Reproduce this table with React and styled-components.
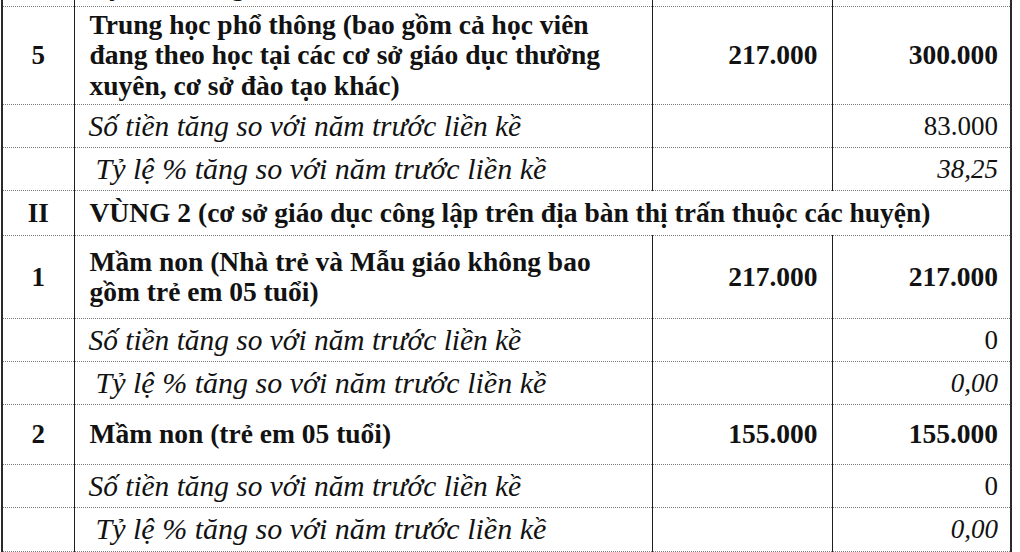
import React from "react";
import styled, { createGlobalStyle } from "styled-components";

const GlobalStyle = createGlobalStyle`
  html, body {
    margin: 0;
    padding: 0;
    background: #ffffff;
    overflow: hidden;
  }
  body {
    font-family: "Liberation Serif", "Times New Roman", serif;
    color: #121212;
  }
`;

const Page = styled.div`
  width: 1020px;
  height: 552px;
  overflow: hidden;
  padding-left: 1px;
  box-sizing: border-box;
`;

const Table = styled.table`
  border-collapse: collapse;
  table-layout: fixed;
  width: 1009px;
  margin-top: -37px;
  font-size: 27px;
  line-height: 30.5px;
  border-left: 2px solid #2a2a2a;
  border-right: 2px solid #2a2a2a;
`;

const Row = styled.tr`
  height: ${(p) => p.$h}px;
`;

const Cell = styled.td`
  padding: 0 ${(p) => p.$pr ?? 10}px 0 ${(p) => p.$pl ?? 15}px;
  border-left: 1px solid #1e1e1e;
  border-right: 1px solid #1e1e1e;
  border-top: 1px dotted #7a7a7a;
  border-bottom: 1px dotted #7a7a7a;
  text-align: ${(p) => p.$align || "left"};
  font-size: ${(p) => p.$size ?? 27}px;
  font-weight: ${(p) => (p.$bold ? 700 : 400)};
  font-style: ${(p) => (p.$italic ? "italic" : "normal")};
  vertical-align: middle;
  white-space: nowrap;
  overflow: hidden;
`;

const IndexCell = styled(Cell).attrs({ $align: "center", $bold: true, $pl: 0, $pr: 0 })``;

const NumCell = styled(Cell).attrs({ $align: "right", $pl: 0 })``;

const INC = "Số tiền tăng so với năm trước liền kề";
const PCT = "Tỷ lệ % tăng so với năm trước liền kề";

const rows = [
  { type: "pct", h: 43, value: "" },
  {
    type: "main",
    h: 98,
    idx: "5",
    lines: [
      "Trung học phổ thông (bao gồm cả học viên",
      "đang theo học tại các cơ sở giáo dục thường",
      "xuyên, cơ sở đào tạo khác)",
    ],
    a: "217.000",
    b: "300.000",
  },
  { type: "inc", h: 43, value: "83.000" },
  { type: "pct", h: 43, value: "38,25" },
  {
    type: "region",
    h: 45,
    idx: "II",
    text: "VÙNG 2 (cơ sở giáo dục công lập trên địa bàn thị trấn thuộc các huyện)",
  },
  {
    type: "main",
    h: 83,
    idx: "1",
    lines: ["Mầm non (Nhà trẻ và Mẫu giáo không bao", "gồm trẻ em 05 tuổi)"],
    a: "217.000",
    b: "217.000",
  },
  { type: "inc", h: 43, value: "0" },
  { type: "pct", h: 43, value: "0,00" },
  {
    type: "main",
    h: 60,
    idx: "2",
    lines: ["Mầm non (trẻ em 05 tuổi)"],
    a: "155.000",
    b: "155.000",
  },
  { type: "inc", h: 43, value: "0" },
  { type: "pct", h: 44, value: "0,00" },
];

function TableRow({ row }) {
  if (row.type === "region") {
    return (
      <Row $h={row.h}>
        <IndexCell>{row.idx}</IndexCell>
        <Cell colSpan={3} $bold $size={27.5}>
          {row.text}
        </Cell>
      </Row>
    );
  }
  if (row.type === "main") {
    return (
      <Row $h={row.h}>
        <IndexCell>{row.idx}</IndexCell>
        <Cell $bold $size={27.5}>
          {row.lines.map((l, i) => (
            <React.Fragment key={i}>
              {i > 0 && <br />}
              {l}
            </React.Fragment>
          ))}
        </Cell>
        <NumCell $bold $pr={14} $size={27.5}>
          {row.a}
        </NumCell>
        <NumCell $bold $pr={12} $size={27.5}>
          {row.b}
        </NumCell>
      </Row>
    );
  }
  const isPct = row.type === "pct";
  return (
    <Row $h={row.h}>
      <IndexCell />
      <Cell $italic $size={isPct ? 30 : 29.4} $pl={isPct ? 21 : 14}>
        {isPct ? PCT : INC}
      </Cell>
      <NumCell $pr={14} />
      <NumCell $italic={isPct} $pr={12}>
        {row.value}
      </NumCell>
    </Row>
  );
}

export default function App() {
  return (
    <Page>
      <GlobalStyle />
      <Table>
        <colgroup>
          <col style={{ width: 72 }} />
          <col style={{ width: 578 }} />
          <col style={{ width: 180 }} />
          <col style={{ width: 179 }} />
        </colgroup>
        <tbody>
          {rows.map((r, i) => (
            <TableRow key={i} row={r} />
          ))}
        </tbody>
      </Table>
    </Page>
  );
}
